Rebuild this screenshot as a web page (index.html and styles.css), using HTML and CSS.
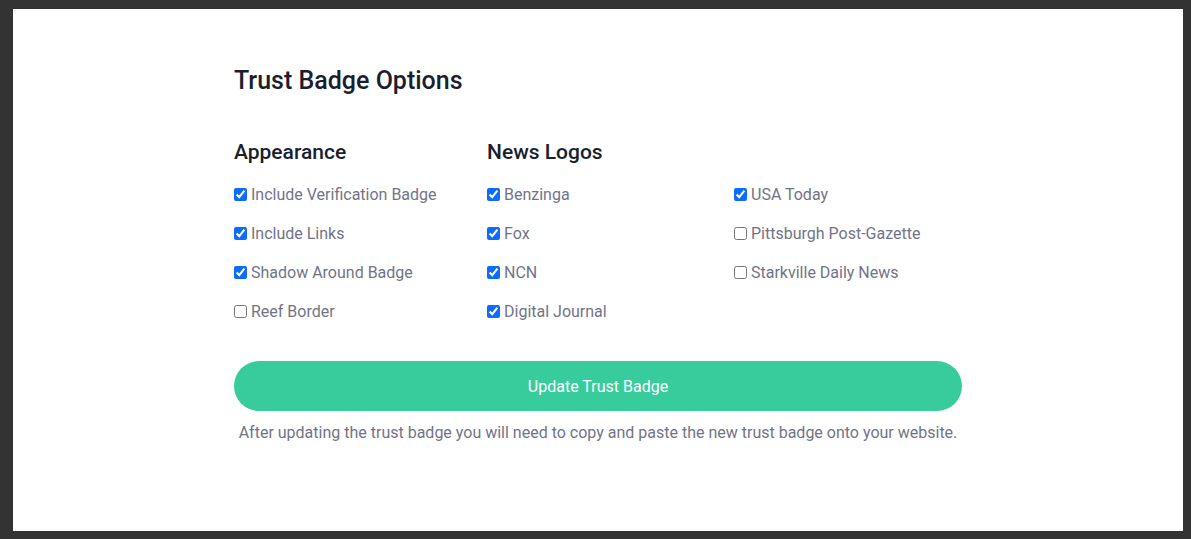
FILE: index.html
```html
<!DOCTYPE html>
<html>
<head>
<meta charset="utf-8">
<link rel="stylesheet" href="styles.css">
</head>
<body>
<div class="modal">
  <div class="content">
    <h2 class="title">Trust Badge Options</h2>
    <div class="cols">
      <div class="col">
        <h3 class="col-head">Appearance</h3>
        <label class="opt"><input type="checkbox" checked> Include Verification Badge</label>
        <label class="opt"><input type="checkbox" checked> Include Links</label>
        <label class="opt"><input type="checkbox" checked> Shadow Around Badge</label>
        <label class="opt"><input type="checkbox"> Reef Border</label>
      </div>
      <div class="col">
        <h3 class="col-head">News Logos</h3>
        <label class="opt"><input type="checkbox" checked> Benzinga</label>
        <label class="opt"><input type="checkbox" checked> Fox</label>
        <label class="opt"><input type="checkbox" checked> NCN</label>
        <label class="opt"><input type="checkbox" checked> Digital Journal</label>
      </div>
      <div class="col">
        <h3 class="col-head blank">&nbsp;</h3>
        <label class="opt"><input type="checkbox" checked> USA Today</label>
        <label class="opt"><input type="checkbox"> Pittsburgh Post-Gazette</label>
        <label class="opt"><input type="checkbox"> Starkville Daily News</label>
      </div>
    </div>
    <button class="update">Update Trust Badge</button>
    <p class="note">After updating the trust badge you will need to copy and paste the new trust badge onto your website.</p>
  </div>
</div>
</body>
</html>
```
FILE: styles.css
```css
html, body {
  margin: 0;
  padding: 0;
}
body {
  background: #333333;
  font-family: Roboto, "Liberation Sans", sans-serif;
  width: 1191px;
  height: 539px;
  overflow: hidden;
}
.modal {
  width: 1170px;
  height: 522px;
  margin: 9px 0 0 13px;
  background: #ffffff;
  box-sizing: border-box;
  padding-top: 57px;
}
.content {
  width: 728px;
  margin: 0 auto;
}
.title {
  margin: 0;
  font-size: 25px;
  line-height: 30px;
  font-weight: 500;
  color: #1b1e2e;
}
.cols {
  display: grid;
  grid-template-columns: 253px 247px 1fr;
  margin-top: 44px;
}
.col {
  display: flex;
  flex-direction: column;
}
.col-head {
  margin: 0 0 19px;
  font-size: 21px;
  line-height: 24px;
  font-weight: 500;
  color: #1b1e2e;
}
.opt {
  display: flex;
  align-items: center;
  height: 22px;
  margin-bottom: 17px;
  font-size: 16px;
  color: #717488;
}
.opt input {
  width: 13px;
  height: 13px;
  margin: 0 4px 0 0;
  accent-color: #0b6cff;
}
.update {
  display: block;
  width: 100%;
  height: 50px;
  margin-top: 22px;
  border: 0;
  border-radius: 25px;
  background: #38cc9d;
  color: #ffffff;
  font-family: Roboto, "Liberation Sans", sans-serif;
  font-size: 16px;
}
.note {
  margin: 11px 0 0;
  text-align: center;
  font-size: 16px;
  line-height: 22px;
  color: #717488;
}
```
